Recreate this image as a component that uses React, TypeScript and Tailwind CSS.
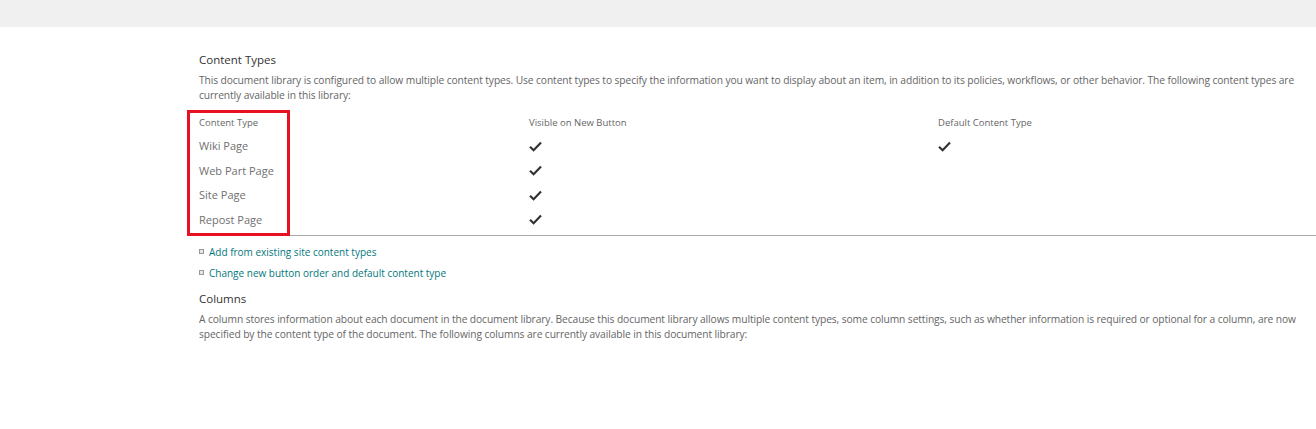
const contentTypes = [
  { name: 'Wiki Page', visible: true, isDefault: true },
  { name: 'Web Part Page', visible: true, isDefault: false },
  { name: 'Site Page', visible: true, isDefault: false },
  { name: 'Repost Page', visible: true, isDefault: false },
];

function Check() {
  return (
    <svg width="13" height="11" viewBox="0 0 13 11" className="block">
      <path d="M1 5.8 L4.6 9.2 L12 1.6" fill="none" stroke="#333" strokeWidth="2.2" />
    </svg>
  );
}

function Bullet() {
  return <span className="inline-block w-[5px] h-[5px] border border-[#999] bg-[#e6e6e6] mr-[5px] mb-[2px]" />;
}

export default function App() {
  return (
    <div className="min-h-[429px] bg-white text-[#444]" style={{ fontFamily: '"Open Sans", "Noto Sans", sans-serif' }}>
      <div className="h-[27px] bg-[#f0f0f0]" />

      <div className="pl-[187px] pt-[24px]">
        <div className="px-3">
          <h2 className="text-[11.5px] leading-[18px] text-[#333]">Content Types</h2>
          <p className="mt-[4px] text-[10.25px] leading-[15px] text-[#666] tracking-[-0.1px]">
            This document library is configured to allow multiple content types. Use content types to specify the information you want to display about an item, in addition to its policies, workflows, or other behavior. The following content types are currently available in this library:
          </p>
        </div>

        <div className="relative mt-[7px] border-b border-[#ababab]">
          <div className="grid grid-cols-[330px_409px_1fr] px-3 pt-[6px] pb-[4px] text-[9.5px] leading-[14px] text-[#666]">
            <div>Content Type</div>
            <div>Visible on New Button</div>
            <div>Default Content Type</div>
          </div>
          <div className="pb-[3px]">
            {contentTypes.map((ct) => (
              <div key={ct.name} className="grid grid-cols-[330px_409px_1fr] items-center px-3 h-[24.5px] text-[11px] text-[#707070]">
                <div>{ct.name}</div>
                <div>{ct.visible && <Check />}</div>
                <div>{ct.isDefault && <Check />}</div>
              </div>
            ))}
          </div>
          <div className="absolute left-0 top-0 w-[103px] bottom-[-1px] border-[3px] border-[#e81123]" />
        </div>

        <ul className="px-3 mt-[6px] text-[10px] leading-[21px] text-[#03787c]">
          <li><Bullet />Add from existing site content types</li>
          <li><Bullet />Change new button order and default content type</li>
        </ul>

        <div className="px-3 mt-[6px]">
          <h2 className="text-[11.5px] leading-[18px] text-[#333]">Columns</h2>
          <p className="mt-[4px] text-[10.25px] leading-[15px] text-[#666] tracking-[-0.1px]">
            A column stores information about each document in the document library. Because this document library allows multiple content types, some column settings, such as whether information is required or optional for a column, are now specified by the content type of the document. The following columns are currently available in this document library:
          </p>
        </div>
      </div>
    </div>
  );
}
